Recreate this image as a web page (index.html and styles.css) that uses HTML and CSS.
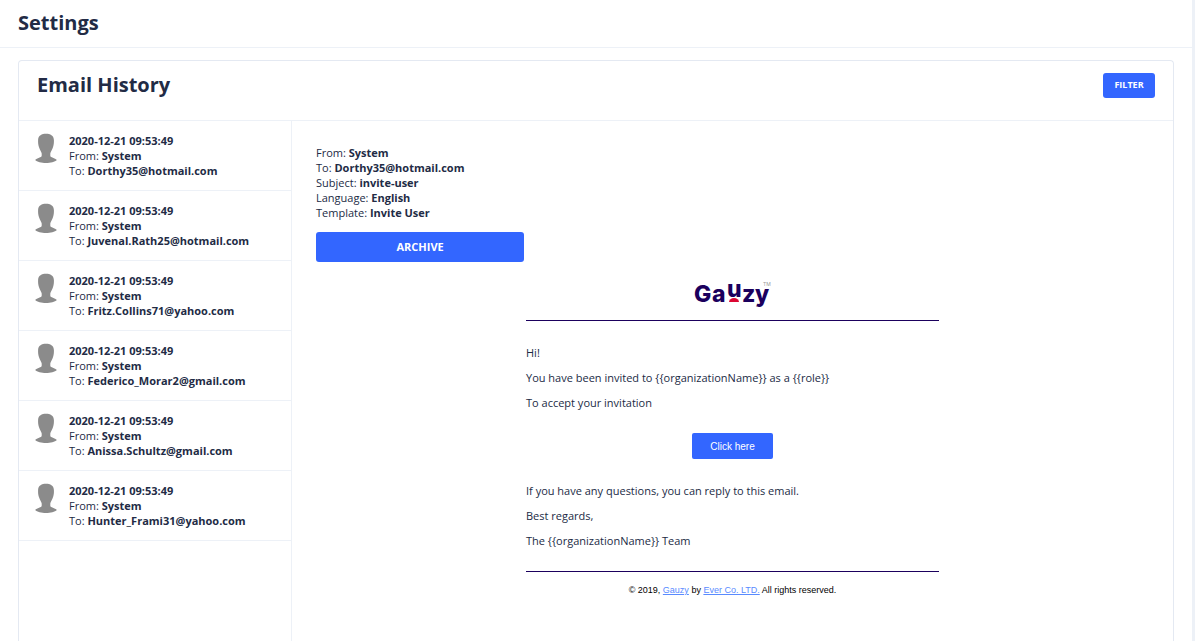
FILE: index.html
```html
<!DOCTYPE html>
<html lang="en">
<head>
<meta charset="utf-8">
<meta name="viewport" content="width=device-width, initial-scale=1">
<title>Settings - Email History</title>
<link rel="stylesheet" href="styles.css">
</head>
<body>
<svg class="sprite" aria-hidden="true">
  <symbol id="avatar" viewBox="0 0 22 30">
    <path d="M11 .8C15.200 .8 18.700 2.500 18.900 7C19 9.500 18.900 11.500 18 14.200C17.300 16.800 15.500 18.700 15.300 20.500V22.700C15.400 24.600 20 24.800 21.800 26.900C20 28.900 15.500 29.900 11 29.900S2 28.900 .2 26.900C2 24.800 6.600 24.600 6.700 22.700V20.500C6.500 18.700 4.700 16.800 4 14.200C3.100 11.500 3 9.500 3.100 7C3.300 2.500 6.800 .8 11 .8Z"/>
  </symbol>
</svg>
<div class="page">
  <header class="page-header"><h1 class="title">Settings</h1></header>
  <main class="content">
    <section class="card">
      <div class="card-header">
        <h2 class="title">Email History</h2>
        <button class="btn btn-filter" type="button">FILTER</button>
      </div>
      <div class="card-body">
        <ul class="email-list">
          <li><button class="email-item" type="button"><svg class="avatar" aria-hidden="true"><use href="#avatar"/></svg><span class="email-meta"><b>2020-12-21 09:53:49</b><span>From: <b>System</b></span><span>To: <b>Dorthy35@hotmail.com</b></span></span></button></li>
          <li><button class="email-item" type="button"><svg class="avatar" aria-hidden="true"><use href="#avatar"/></svg><span class="email-meta"><b>2020-12-21 09:53:49</b><span>From: <b>System</b></span><span>To: <b>Juvenal.Rath25@hotmail.com</b></span></span></button></li>
          <li><button class="email-item" type="button"><svg class="avatar" aria-hidden="true"><use href="#avatar"/></svg><span class="email-meta"><b>2020-12-21 09:53:49</b><span>From: <b>System</b></span><span>To: <b>Fritz.Collins71@yahoo.com</b></span></span></button></li>
          <li><button class="email-item" type="button"><svg class="avatar" aria-hidden="true"><use href="#avatar"/></svg><span class="email-meta"><b>2020-12-21 09:53:49</b><span>From: <b>System</b></span><span>To: <b>Federico_Morar2@gmail.com</b></span></span></button></li>
          <li><button class="email-item" type="button"><svg class="avatar" aria-hidden="true"><use href="#avatar"/></svg><span class="email-meta"><b>2020-12-21 09:53:49</b><span>From: <b>System</b></span><span>To: <b>Anissa.Schultz@gmail.com</b></span></span></button></li>
          <li><button class="email-item" type="button"><svg class="avatar" aria-hidden="true"><use href="#avatar"/></svg><span class="email-meta"><b>2020-12-21 09:53:49</b><span>From: <b>System</b></span><span>To: <b>Hunter_Frami31@yahoo.com</b></span></span></button></li>
        </ul>
        <article class="detail">
          <div class="detail-meta">
            <span>From: <b>System</b></span>
            <span>To: <b>Dorthy35@hotmail.com</b></span>
            <span>Subject: <b>invite-user</b></span>
            <span>Language: <b>English</b></span>
            <span>Template: <b>Invite User</b></span>
          </div>
          <button class="btn btn-archive" type="button">ARCHIVE</button>
          <div class="mail">
            <div class="mail-logo">
              <svg class="logo" viewBox="0 0 78 28" role="img" aria-label="Gauzy">
                <g class="logo-word">
                  <text x="0" y="22">G</text><text x="18" y="22">a</text><text x="33" y="17">u</text><text x="48" y="22">z</text><text x="61" y="22">y</text>
                </g>
                <path class="logo-dot" d="M35 22a5 4 0 0 1 10 0z"/>
                <text class="logo-tm" x="69" y="6">TM</text>
              </svg>
            </div>
            <div class="mail-text">
              <p>Hi!</p>
              <p>You have been invited to {{organizationName}} as a {{role}}</p>
              <p>To accept your invitation</p>
            </div>
            <button class="mail-action" type="button">Click here</button>
            <div class="mail-text mail-closing">
              <p>If you have any questions, you can reply to this email.</p>
              <p>Best regards,</p>
              <p>The {{organizationName}} Team</p>
            </div>
            <footer class="mail-footer">© 2019, <a href="#">Gauzy</a> by <a href="#">Ever Co. LTD.</a> All rights reserved.</footer>
          </div>
        </article>
      </div>
    </section>
  </main>
</div>
</body>
</html>
```
FILE: styles.css
```css
* { box-sizing: border-box; }
body {
  margin: 0;
  color: #222b45;
  background: #fff;
  font: 11px/15px "Open Sans", "Noto Sans", sans-serif;
}
ul, p, h1, h2 { margin: 0; padding: 0; }
button { border: 0; cursor: pointer; }
.sprite { display: none; }
.page {
  min-height: 100vh;
  display: flex;
  flex-direction: column;
  border-right: 3px solid #edf1f7;
}
.page-header {
  padding: 11px 18px 12px;
  border-bottom: 1px solid #edf1f7;
}
.title { font-size: 20px; line-height: 24px; font-weight: 700; }
.content {
  flex: 1;
  display: flex;
  padding: 12px 18px 0;
}
.card {
  flex: 1;
  display: flex;
  flex-direction: column;
  border: 1px solid #e4e9f2;
  border-bottom: 0;
  border-radius: 4px 4px 0 0;
}
.card-header {
  display: flex;
  justify-content: space-between;
  align-items: flex-start;
  padding: 12px 18px 22px;
  border-bottom: 1px solid #edf1f7;
}
.btn {
  color: #fff;
  background: #36f;
  border-radius: 3px;
  font-family: inherit;
  font-weight: 700;
}
.btn-filter { min-width: 52px; padding: 4px 8px 6px; font-size: 9px; line-height: 15px; }
.card-body { flex: 1; display: flex; }
.email-list {
  flex: 0 0 273px;
  list-style: none;
  border-right: 1px solid #edf1f7;
}
.email-item {
  display: flex;
  gap: 12px;
  width: 100%;
  padding: 12px 16px;
  border-bottom: 1px solid #edf1f7;
  background: none;
  color: inherit;
  font: inherit;
  text-align: left;
}
.avatar { width: 22px; height: 30px; fill: #8b8b8b; }
.email-meta, .detail-meta { display: flex; flex-direction: column; }
b { font-weight: 700; }
.detail { flex: 1; padding: 24px; }
.btn-archive {
  width: 25%;
  margin-top: 12px;
  padding: 7px 0;
  font-size: 11px;
  line-height: 16px;
}
.mail {
  display: flex;
  flex-direction: column;
  max-width: 413px;
  margin: 18px auto 0;
}
.mail-logo {
  padding-bottom: 12px;
  border-bottom: 1px solid #1b005d;
  text-align: center;
}
.logo { display: block; width: 78px; height: 28px; margin: 0 auto; overflow: visible; }
.logo-word { fill: #1b005d; font: 800 23px Inter, sans-serif; }
.logo-dot { fill: #db0632; }
.logo-tm { fill: #999; font: 5px Inter, sans-serif; }
.mail-text {
  display: grid;
  gap: 10px;
  padding: 24px 0 23px;
}
.mail-action {
  align-self: center;
  padding: 7px 18px 5px;
  border-radius: 2px;
  color: #fff;
  background: #36f;
  font: 10px/14px "Liberation Sans", Arial, sans-serif;
}
.mail-closing { border-bottom: 1px solid #1b005d; }
.mail-footer {
  padding: 11px 0;
  color: #000;
  font: 9px/15px "Liberation Sans", Arial, sans-serif;
  text-align: center;
}
.mail-footer a { color: #598bff; }
```
